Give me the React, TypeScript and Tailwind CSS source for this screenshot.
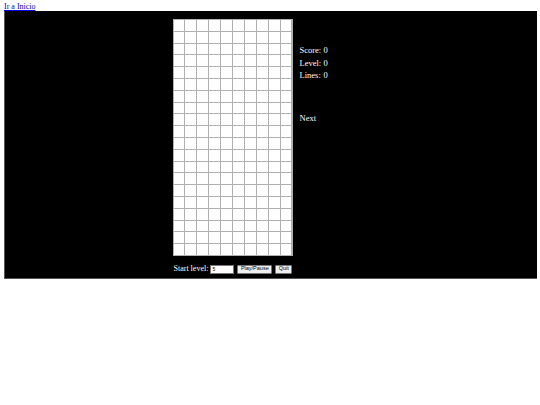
import React from 'react';

const ROWS = 20;
const COLS = 10;

const Board = () => (
  <div className="grid grid-cols-10 grid-rows-20 gap-px bg-[#b0b0b0] p-px w-[120px] h-[237px]">
    {Array.from({ length: ROWS * COLS }).map((_, i) => (
      <div key={i} className="bg-white" />
    ))}
  </div>
);

export default function App() {
  return (
    <div className="bg-white min-h-screen font-['Liberation_Serif',serif]">
      <div className="px-[4px] pt-[2px] h-[11px] text-[8px] leading-[9px]">
        <a href="#" className="text-[#0000ee] underline">Ir a Inicio</a>
      </div>

      {/* Game area */}
      <div className="mx-[4px] w-[533px] h-[268px] bg-black border-l border-b border-[#555] flex justify-center gap-[7px] pt-[8px] pr-[1px]">
        <div className="flex flex-col w-[120px]">
          <Board />
          <div className="flex items-center mt-[8px] h-[10px] text-white text-[8px] whitespace-nowrap">
            <span className="ml-[1px] mr-[2px]">Start level:</span>
            <input
              type="text"
              defaultValue="5"
              className="w-[24px] h-[9px] bg-white text-black text-[5px] px-[1px] border border-[#767676] font-['Liberation_Sans',sans-serif] outline-none"
            />
            <button className="ml-[3px] h-[9px] px-[2.5px] bg-[#efefef] border border-[#767676] rounded-[1px] text-black text-[5.5px] leading-none font-['Liberation_Sans',sans-serif]">
              Play/Pause
            </button>
            <button className="ml-[3px] h-[9px] px-[2.5px] bg-[#efefef] border border-[#767676] rounded-[1px] text-black text-[5.5px] leading-none font-['Liberation_Sans',sans-serif]">
              Quit
            </button>
          </div>
        </div>

        {/* Side panel */}
        <div className="w-[69px] text-white text-[8.5px] leading-[12.5px] pt-[25px]">
          <div className="grid grid-cols-[24px_auto]">
            <span>Score:</span>
            <span>0</span>
            <span>Level:</span>
            <span>0</span>
            <span>Lines:</span>
            <span>0</span>
          </div>
          <div className="mt-[30px]">Next</div>
        </div>
      </div>
    </div>
  );
}
